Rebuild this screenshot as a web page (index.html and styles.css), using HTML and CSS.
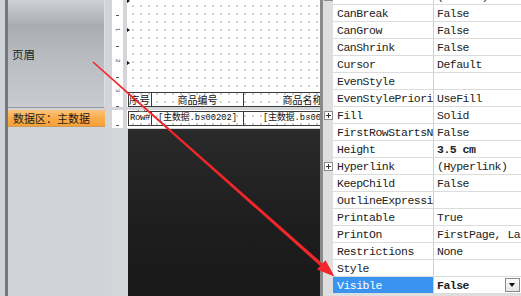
FILE: index.html
```html
<!DOCTYPE html>
<html>
<head>
<meta charset="utf-8">
<link rel="stylesheet" href="styles.css">
</head>
<body>
<div class="sidebar">
  <div class="band-head"><span>页眉</span></div>
  <div class="band-data">数据区：主数据</div>
</div>

<div class="designer">
  <div class="band band1">
    <div class="gutter"></div>
    <div class="ruler">
      <svg width="11" height="107" viewBox="0 0 11 107">
        <g stroke="#555" stroke-width="1">
          <line x1="4" y1="15.5" x2="7" y2="15.5"/>
          <line x1="4" y1="46.5" x2="7" y2="46.5"/>
          <line x1="4" y1="77.5" x2="7" y2="77.5"/>
          <line x1="4" y1="106.5" x2="7" y2="106.5"/>
        </g>
        <g font-family="Liberation Sans, sans-serif" font-size="6" fill="#444">
          <text transform="translate(3.5,28) rotate(90)">1</text>
          <text transform="translate(3.5,59) rotate(90)">2</text>
          <text transform="translate(3.5,89) rotate(90)">3</text>
        </g>
      </svg>
    </div>
    <div class="gap"></div>
    <div class="canvas">
      <i class="marker m1"></i><i class="marker m2"></i><i class="marker m3"></i>
      <div class="trow head">
        <div class="c c1">序号</div>
        <div class="c c2">商品编号</div>
        <div class="c c3">商品名称</div>
      </div>
    </div>
  </div>
  <div class="band band2">
    <div class="gutter"></div>
    <div class="ruler">
      <svg width="11" height="18" viewBox="0 0 11 18">
        <line x1="4" y1="15.5" x2="7" y2="15.5" stroke="#555"/>
      </svg>
    </div>
    <div class="gap"></div>
    <div class="canvas">
      <div class="trow data">
        <div class="c c1 mono">Row#</div>
        <div class="c c2 mono">[主数据.bs00202]</div>
        <div class="c c3 mono">[主数据.bs00203]</div>
      </div>
      <i class="handle"></i>
    </div>
  </div>
  <div class="dark"></div>
</div>

<div class="props">
  <div class="grid">
    <div class="row"><div class="exp"><i class="plus"></i></div><div class="name">Border</div><div class="val">(Border)</div></div>
    <div class="row"><div class="exp"></div><div class="name">CanBreak</div><div class="val">False</div></div>
    <div class="row"><div class="exp"></div><div class="name">CanGrow</div><div class="val">False</div></div>
    <div class="row"><div class="exp"></div><div class="name">CanShrink</div><div class="val">False</div></div>
    <div class="row"><div class="exp"></div><div class="name">Cursor</div><div class="val">Default</div></div>
    <div class="row"><div class="exp"></div><div class="name">EvenStyle</div><div class="val"></div></div>
    <div class="row"><div class="exp"></div><div class="name">EvenStylePriority</div><div class="val">UseFill</div></div>
    <div class="row"><div class="exp"><i class="plus"></i></div><div class="name">Fill</div><div class="val">Solid</div></div>
    <div class="row"><div class="exp"></div><div class="name">FirstRowStartsNewPage</div><div class="val">False</div></div>
    <div class="row"><div class="exp"></div><div class="name">Height</div><div class="val bold">3.5 cm</div></div>
    <div class="row"><div class="exp"><i class="plus"></i></div><div class="name">Hyperlink</div><div class="val">(Hyperlink)</div></div>
    <div class="row"><div class="exp"></div><div class="name">KeepChild</div><div class="val">False</div></div>
    <div class="row"><div class="exp"></div><div class="name">OutlineExpression</div><div class="val"></div></div>
    <div class="row"><div class="exp"></div><div class="name">Printable</div><div class="val">True</div></div>
    <div class="row"><div class="exp"></div><div class="name">PrintOn</div><div class="val">FirstPage, LastPage</div></div>
    <div class="row"><div class="exp"></div><div class="name">Restrictions</div><div class="val">None</div></div>
    <div class="row"><div class="exp"></div><div class="name">Style</div><div class="val"></div></div>
    <div class="row selected"><div class="exp"></div><div class="name">Visible</div><div class="val bold">False<span class="dd"></span></div></div>
  </div>
</div>

<svg class="arrow" width="521" height="296" viewBox="0 0 521 296">
  <polygon fill="#f0262b" points="93.53,61.4 322.43,263.43 325.6,260.2 334.5,276.5 316.8,269.6 320.17,265.97 92.47,62.6"/>
</svg>
</body>
</html>
```

FILE: styles.css
```css
html, body {
  margin: 0;
  padding: 0;
}
body {
  width: 521px;
  height: 296px;
  overflow: hidden;
  display: flex;
  position: relative;
  background: #cfd2d6;
  font-family: "Noto Sans CJK SC", sans-serif;
}

/* left band list */
.sidebar {
  width: 97px;
  margin-left: 5px;
  border-left: 3px solid #74777b;
  display: flex;
  flex-direction: column;
  background: #d0d3d8;
  flex: none;
}
.band-head {
  height: 108px;
  box-sizing: border-box;
  border-bottom: 1px solid #979a9e;
  border-right: 1px solid #dcdee1;
  background: linear-gradient(180deg, #cdd0d4 0%, #a9acb1 24%, #b8bbc0 52%, #c8cbcf 100%);
  display: flex;
  align-items: center;
  padding-left: 4px;
  font-size: 11.5px;
  color: #1e1e1e;
}
.band-data {
  margin-top: 2px;
  height: 16px;
  line-height: 16px;
  padding-left: 5px;
  font-size: 11px;
  color: #1e1e1e;
  background: linear-gradient(180deg, #fdc57a 0%, #f9ac4c 50%, #f7a036 100%);
  border-bottom: 1px solid #c99b62;
  white-space: nowrap;
}

/* designer */
.designer {
  width: 215px;
  flex: none;
  display: flex;
  flex-direction: column;
  background: #d3d5d9;
}
.band {
  display: flex;
}
.band1 { height: 107px; }
.band2 { height: 18px; margin-top: 3px; }
.gutter { width: 7px; flex: none; }
.ruler { width: 11px; flex: none; background: #fff; }
.ruler svg { display: block; }
.gap { width: 4px; flex: none; }
.canvas {
  flex: 1;
  position: relative;
  overflow: hidden;
  background-color: #fff;
  background-image: radial-gradient(circle, #b4b4b4 0.6px, transparent 0.9px);
  background-size: 8px 8px;
  background-position: 2px 2px;
  display: flex;
  flex-direction: column;
  justify-content: flex-end;
}
.band2 .canvas {
  justify-content: flex-start;
  padding-top: 1px;
}
.trow {
  display: flex;
  height: 15px;
  margin-left: 1px;
  box-sizing: border-box;
  border-top: 1px solid #3a3a3a;
  border-bottom: 1px solid #3a3a3a;
  flex: none;
}
.c {
  flex: none;
  border-left: 1px solid #3a3a3a;
  box-sizing: border-box;
  text-align: center;
  font-size: 10px;
  line-height: 13px;
  color: #111;
  white-space: nowrap;
  overflow: hidden;
}
.c1 { width: 23px; }
.c2 { width: 92px; }
.c3 { width: 118px; }
.head .c1 { text-align: left; font-size: 10.5px; }
.mono {
  font-family: "Liberation Mono", "Noto Sans CJK SC", monospace;
  font-size: 8.8px;
}
.data .c1 { font-size: 9px; letter-spacing: -0.4px; text-align: left; padding-left: 1px; }
.marker {
  position: absolute;
  left: 0;
  width: 0;
  height: 0;
  border-top: 2.5px solid transparent;
  border-bottom: 2.5px solid transparent;
  border-left: 3px solid #111;
}
.m1 { top: -1px; }
.m2 { top: 28px; }
.m3 { top: 61px; }
.handle {
  position: absolute;
  left: 11px;
  top: -3px;
  width: 5px;
  height: 3px;
  border: 1px solid #666;
  background: #f4f4f4;
}
.dark {
  flex: 1;
  margin-left: 23px;
  margin-top: 1px;
  background: linear-gradient(180deg, #2a2a2a 0%, #1d1d1d 60%, #191919 100%);
}

/* property grid */
.props {
  flex: 1;
  border-left: 3px solid #8a8a8a;
  background: #dedede;
  overflow: hidden;
  font-family: "Liberation Mono", monospace;
  font-size: 11.5px;
  letter-spacing: -0.5px;
  color: #222;
}
.grid {
  margin-top: -12px;
}
.row {
  display: flex;
  height: 17px;
}
.exp {
  width: 10px;
  flex: none;
  display: flex;
  align-items: center;
  justify-content: center;
}
.plus {
  width: 7px;
  height: 7px;
  border: 1px solid #8d8d8d;
  background: #fff linear-gradient(#333, #333) center / 5px 1px no-repeat;
  position: relative;
}
.plus::after {
  content: "";
  position: absolute;
  left: 3px;
  top: 1px;
  width: 1px;
  height: 5px;
  background: #333;
}
.name, .val {
  background: #fff;
  border-bottom: 1px solid #dcdcdc;
  height: 16px;
  line-height: 18px;
  white-space: nowrap;
  overflow: hidden;
}
.name {
  width: 96px;
  flex: none;
  padding-left: 4px;
  border-right: 1px solid #cfcfcf;
}
.val {
  flex: 1;
  padding-left: 3px;
  position: relative;
}
.bold { font-weight: bold; }
.selected .name {
  background: #3a93ef;
  color: #fff;
}
.dd {
  position: absolute;
  right: 1px;
  top: 1px;
  width: 13px;
  height: 12px;
  border: 1px solid #8a8a8a;
  background: linear-gradient(#fbfbfb, #e6e6e6);
}
.dd::after {
  content: "";
  position: absolute;
  left: 3px;
  top: 4px;
  border-left: 3.5px solid transparent;
  border-right: 3.5px solid transparent;
  border-top: 4px solid #111;
}

.arrow {
  position: absolute;
  left: 0;
  top: 0;
  pointer-events: none;
}
```
